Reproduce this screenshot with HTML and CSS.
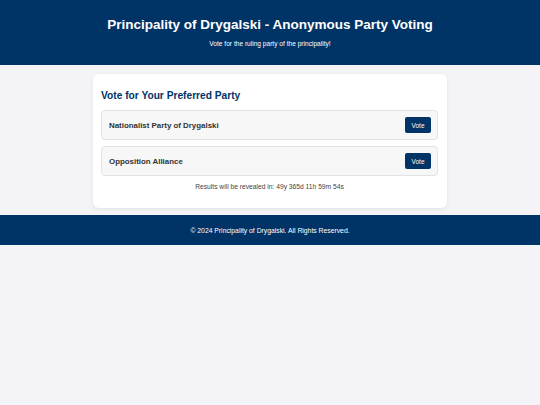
FILE: index.html
```html
<!DOCTYPE html>
<html lang="en">
  <head>
    <meta charset="UTF-8" />
    <meta name="viewport" content="width=device-width, initial-scale=1.0" />
    <title>Principality of Drygalski - Anonymous Party Voting</title>
    <link rel="stylesheet" href="styles.css">
  </head>
  <body>
    <header class="header">
      <h1>Principality of Drygalski - Anonymous Party Voting</h1>
      <p>Vote for the ruling party of the principality!</p>
    </header>

    <main class="container">
      <h2>Vote for Your Preferred Party</h2>

      <div class="party">
        <span class="party-name">Nationalist Party of Drygalski</span>
        <button class="vote-btn">Vote</button>
      </div>

      <div class="party">
        <span class="party-name">Opposition Alliance</span>
        <button class="vote-btn">Vote</button>
      </div>

      <p class="countdown">Results will be revealed in: 49y 365d 11h 59m 54s</p>
    </main>

    <footer class="footer">
      <p>&copy; 2024 Principality of Drygalski. All Rights Reserved.</p>
    </footer>
  </body>
</html>
```

FILE: styles.css
```css
body {
  margin: 0;
  padding: 0;
  background-color: #f4f4f8;
  font-family: "Liberation Sans", Arial, sans-serif;
  color: #333;
}

.header {
  background-color: #003366;
  color: white;
  text-align: center;
  height: 65px;
  box-sizing: border-box;
  padding-top: 17px;
}

.header h1 {
  margin: 0;
  font-size: 13.5px;
  line-height: 16px;
}

.header p {
  margin: 7px 0 0;
  font-size: 6.6px;
  line-height: 8px;
}

.container {
  width: 354px;
  margin: 9px auto 7px;
  background-color: white;
  border-radius: 6px;
  box-shadow: 0 1px 4px rgba(0, 0, 0, 0.08);
  padding: 16px 9px 16px 8px;
  box-sizing: border-box;
}

.container h2 {
  margin: 0 0 8px;
  color: #003366;
  font-size: 10.2px;
  line-height: 12px;
}

.party {
  display: flex;
  justify-content: space-between;
  align-items: center;
  height: 30px;
  box-sizing: border-box;
  padding: 0 6px 0 7px;
  margin-bottom: 6px;
  background-color: #f7f7f7;
  border: 1px solid #e3e3e3;
  border-radius: 4px;
}

.party-name {
  font-size: 7.9px;
  font-weight: bold;
  color: #333;
}

.vote-btn {
  width: 26px;
  height: 16px;
  padding: 0;
  border: none;
  border-radius: 2px;
  background-color: #003366;
  color: white;
  font-family: "Liberation Sans", Arial, sans-serif;
  font-size: 6.5px;
  cursor: pointer;
}

.countdown {
  margin: 0;
  text-align: center;
  font-size: 6.7px;
  line-height: 10px;
  color: #444;
}

.footer {
  background-color: #003366;
  color: white;
  text-align: center;
  height: 30px;
  display: flex;
  align-items: center;
  justify-content: center;
}

.footer p {
  margin: 0;
  font-size: 6.8px;
}
```
